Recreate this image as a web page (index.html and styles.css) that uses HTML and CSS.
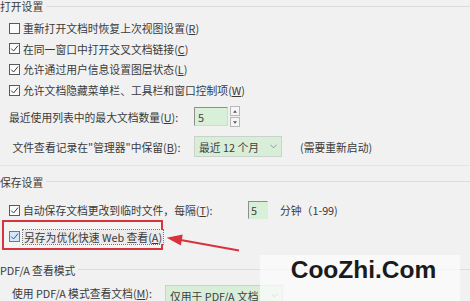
FILE: index.html
```html
<!DOCTYPE html>
<html lang="zh-CN">
<head>
<meta charset="utf-8">
<title>打开设置</title>
<link rel="stylesheet" href="styles.css">
</head>
<body>
<div class="page">
  <div class="sec-head sec-first"><span class="sec-title">打开设置</span><span class="sec-line"></span></div>
  <div class="group g-open">
    <div class="chk-row"><span class="box"></span><span class="txt">重新打开文档时恢复上次视图设置(<u>R</u>)</span></div>
    <div class="chk-row"><span class="box"><svg viewBox="0 0 9 9" class="tick"><path d="M1.2 4.6 L3.6 7 L8 1.6"/></svg></span><span class="txt">在同一窗口中打开交叉文档链接(<u>C</u>)</span></div>
    <div class="chk-row"><span class="box"><svg viewBox="0 0 9 9" class="tick"><path d="M1.2 4.6 L3.6 7 L8 1.6"/></svg></span><span class="txt">允许通过用户信息设置图层状态(<u>L</u>)</span></div>
    <div class="chk-row"><span class="box"><svg viewBox="0 0 9 9" class="tick"><path d="M1.2 4.6 L3.6 7 L8 1.6"/></svg></span><span class="txt">允许文档隐藏菜单栏、工具栏和窗口控制项(<u>W</u>)</span></div>
  </div>
  <div class="form-grid">
    <span class="lbl">最近使用列表中的最大文档数量(<u>U</u>):</span>
    <div class="ctl-row">
      <span class="field spin-field">5</span>
      <span class="spin-btns"><span class="sb"><svg viewBox="0 0 5 3"><path d="M0 3 L2.5 0 L5 3Z"/></svg></span><span class="sb"><svg viewBox="0 0 5 3"><path d="M0 0 L2.5 3 L5 0Z"/></svg></span></span>
    </div>
    <span class="lbl lbl-indent">文件查看记录在"管理器"中保留(<u>B</u>):</span>
    <div class="ctl-row">
      <span class="select sel-recent"><span>最近 12 个月</span><svg class="chev" viewBox="0 0 8 5"><path d="M0.5 0.5 L4 4 L7.5 0.5"/></svg></span>
      <span class="note">(需要重新启动)</span>
    </div>
  </div>
  <div class="separator"></div>
  <div class="sec-head sec-save"><span class="sec-title">保存设置</span><span class="sec-line"></span></div>
  <div class="autosave">
    <div class="chk-row"><span class="box"><svg viewBox="0 0 9 9" class="tick"><path d="M1.2 4.6 L3.6 7 L8 1.6"/></svg></span><span class="txt">自动保存文档更改到临时文件，每隔(<u>T</u>):</span></div>
    <span class="field mini-field">5</span>
    <span class="unit">分钟（1-99)</span>
  </div>
  <div class="highlight">
    <div class="chk-row"><span class="box box-focus"><svg viewBox="0 0 9 9" class="tick tick-blue"><path d="M1.2 4.6 L3.6 7 L8 1.6"/></svg></span><span class="txt focus-txt">另存为优化快速 Web 查看(<u>A</u>)</span></div>
  </div>
  <div class="sec-head sec-pdfa"><span class="sec-title">PDF/A 查看模式</span><span class="sec-line"></span></div>
  <div class="pdfa-row">
    <span class="lbl">使用 PDF/A 模式查看文档(<u>M</u>):</span>
    <span class="select sel-pdfa"><span>仅用于 PDF/A 文档</span><svg class="chev" viewBox="0 0 8 5"><path d="M0.5 0.5 L4 4 L7.5 0.5"/></svg></span>
  </div>

  <svg class="arrow" viewBox="0 0 470 301" width="470" height="301">
    <line x1="239" y1="250.5" x2="178" y2="239.5"/>
    <path d="M166.7 237.7 L182.7 234.6 L180.9 245.4 Z"/>
  </svg>
  <div class="watermark"><span class="wm-text">CooZhi.Com</span></div>
</div>
</body>
</html>
```

FILE: styles.css
```css
html, body {
  margin: 0;
  padding: 0;
}
body {
  width: 470px;
  height: 301px;
  overflow: hidden;
  background: #f1f1f1;
  color: #3a3a3a;
  font-family: "Noto Sans CJK SC", "Noto Sans", sans-serif;
  font-size: 10.8px;
}
.page {
  position: relative;
  width: 470px;
  height: 301px;
}
u {
  text-decoration: underline;
  text-underline-offset: 1px;
}

/* section headers */
.sec-head {
  display: flex;
  align-items: center;
  height: 12px;
  line-height: 12px;
  margin-left: 0;
}
.sec-title {
  white-space: nowrap;
}
.sec-line {
  flex: 1;
  height: 0;
  border-top: 1px solid #dcdcdc;
  margin-left: 3px;
}
.sec-first { margin-top: 0; }
.sec-save { margin-top: 10px; }
.sec-pdfa { margin-top: 14px; }

/* checkbox rows */
.g-open {
  padding-top: 6px;
  padding-left: 9px;
}
.chk-row {
  display: flex;
  align-items: center;
  height: 20.6px;
  white-space: nowrap;
}
.box {
  width: 9px;
  height: 9px;
  border: 1px solid #5a5a5a;
  background: #fbfbfb;
  margin-right: 3px;
  display: flex;
  flex: none;
}
.tick {
  width: 9px;
  height: 9px;
  fill: none;
  stroke: #3c3c3c;
  stroke-width: 1;
}
.box-focus {
  border-color: #3f86c8;
  background: #d4e8f7;
}
.tick-blue {
  stroke: #2d5f8f;
}

/* form grid */
.form-grid {
  margin-top: 1.6px;
  padding-left: 9px;
  display: grid;
  grid-template-columns: 185px auto;
  grid-template-rows: 30px 30px;
  align-items: center;
}
.lbl {
  white-space: nowrap;
}
.lbl-indent {
  padding-left: 3.5px;
}
.ctl-row {
  display: flex;
  align-items: center;
}
.field {
  display: flex;
  align-items: center;
  box-sizing: border-box;
  background: #d8efd8;
  border: 1px solid #cfdccf;
  border-top-color: #8e8e8e;
  border-left-color: #8e8e8e;
  color: #404040;
  padding-left: 3px;
}
.spin-field {
  width: 34px;
  height: 19px;
}
.spin-btns {
  display: flex;
  flex-direction: column;
  margin-left: 2px;
  gap: 1px;
}
.sb {
  width: 8px;
  height: 8px;
  border: 1px solid #b8b8b8;
  background: #f6f6f6;
  display: flex;
  align-items: center;
  justify-content: center;
}
.sb svg {
  width: 4px;
  height: 3px;
  fill: #555;
}
.select {
  display: flex;
  align-items: center;
  justify-content: space-between;
  box-sizing: border-box;
  height: 21px;
  background: #d9eed9;
  border: 1px solid #c9d3c9;
  padding: 0 4px 0 4px;
  white-space: nowrap;
  color: #3e3e3e;
}
.sel-recent {
  width: 88px;
}
.chev {
  width: 7px;
  height: 5px;
  fill: none;
  stroke: #8a8a8a;
  stroke-width: 1;
}
.note {
  margin-left: 18px;
  white-space: nowrap;
}
.separator {
  margin-top: 3px;
  height: 1px;
  background: #e5e5e5;
}

/* autosave */
.autosave {
  margin-top: 12px;
  padding-left: 9px;
  height: 20px;
  display: grid;
  grid-template-columns: 239px 20px auto;
  align-items: center;
}
.mini-field {
  width: 20px;
  height: 18px;
  padding-left: 2px;
  border-right-color: #d8efd8;
  border-bottom-color: #d8efd8;
}
.unit {
  margin-left: 12px;
  white-space: nowrap;
}

/* highlighted row */
.highlight {
  margin-left: 2px;
  width: 161px;
  height: 30px;
  box-sizing: border-box;
  border: 2px solid #d5353f;
  padding: 5px 0 1px 5px;
  background: #f6f3f3;
}
.highlight .chk-row {
  height: 20px;
}
.focus-txt {
  outline: 1px dotted #777;
  outline-offset: 0;
  background: #ebebeb;
  padding: 0 1px;
  line-height: 14px;
}

/* pdf/a row */
.pdfa-row {
  margin-top: 8.5px;
  padding-left: 12px;
  height: 20px;
  display: grid;
  grid-template-columns: 153px 118px;
  align-items: start;
}
.pdfa-row .lbl {
  line-height: 18px;
}
.sel-pdfa {
  width: 118px;
  height: 22px;
  margin-top: 0.5px;
}

/* overlays */
.arrow {
  position: absolute;
  left: 0;
  top: 0;
  pointer-events: none;
}
.arrow line {
  stroke: #d8323c;
  stroke-width: 2;
}
.arrow path {
  fill: #d8323c;
}
.watermark {
  position: absolute;
  left: 260px;
  top: 255px;
  width: 200px;
  height: 46px;
  background: rgba(252, 252, 252, 0.72);
  display: flex;
  justify-content: center;
}
.wm-text {
  font-family: "Liberation Sans", Arial, sans-serif;
  font-weight: bold;
  font-size: 24.5px;
  line-height: 30px;
  color: #1b1b1b;
  margin-top: 0px;
  margin-left: 7px;
}
```
